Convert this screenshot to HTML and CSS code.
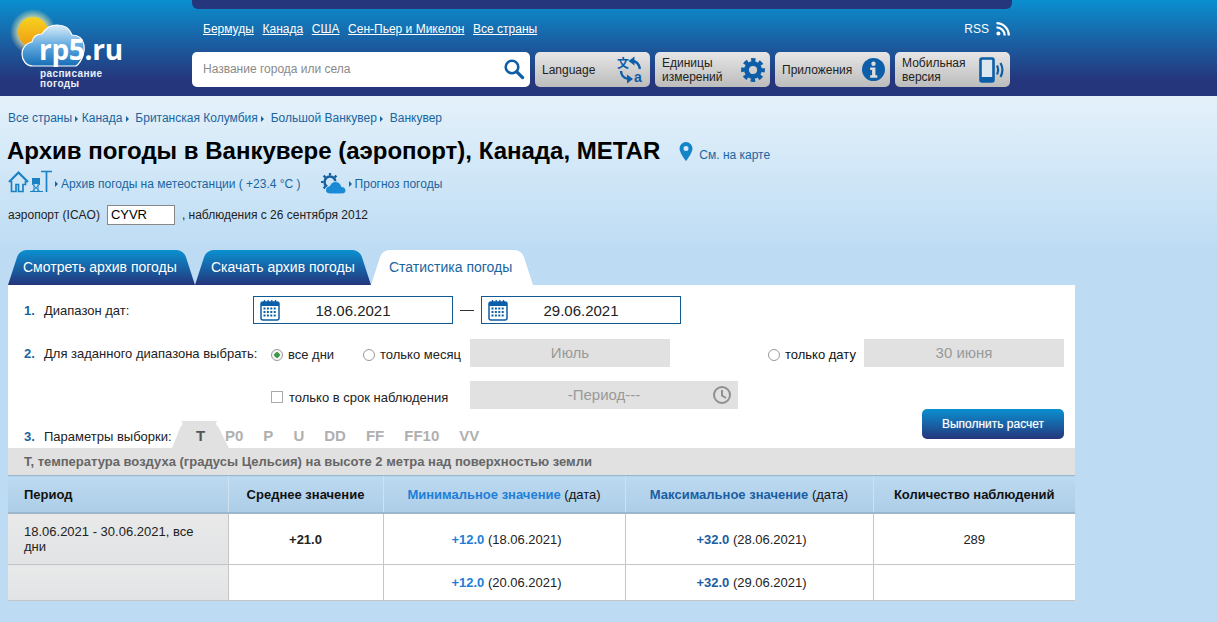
FILE: index.html
```html
<!DOCTYPE html>
<html>
<head>
  <meta charset="UTF-8" />
  <title>Архив погоды в Ванкувере (аэропорт), METAR</title>
  <link rel="stylesheet" href="styles.css">
</head>
<body>

  <div class="header">
    <a class="logo">
      <svg class="logo-art" width="90" height="70" viewBox="0 0 90 70">
        <defs>
          <radialGradient id="sunGlow" cx="0.5" cy="0.5" r="0.5">
            <stop offset="0.6" stop-color="#fff2a8" stop-opacity="0.75"/>
            <stop offset="1" stop-color="#fff2a8" stop-opacity="0"/>
          </radialGradient>
          <linearGradient id="sunFill" x1="0" y1="0" x2="0" y2="1">
            <stop offset="0" stop-color="#f6d21f"/>
            <stop offset="1" stop-color="#f09a12"/>
          </linearGradient>
          <linearGradient id="cloudFill" x1="0" y1="0" x2="0" y2="1">
            <stop offset="0" stop-color="#d9ecf9"/>
            <stop offset="0.5" stop-color="#62aae0"/>
            <stop offset="1" stop-color="#156eb6"/>
          </linearGradient>
        </defs>
        <circle cx="24" cy="24" r="23" fill="url(#sunGlow)"/>
        <circle cx="24" cy="24" r="15" fill="url(#sunFill)"/>
        <path d="M24 58c-7 0-11-6-11-12 0-6 4-11 10-12 1-5 5-8 10-8 3-5 8-9 15-9 8 0 13 4 15 10 7 0 11 4 12 10 1 5-1 16-8 21z" fill="url(#cloudFill)" stroke="#fff" stroke-width="1.2"/>
      </svg>
      <span class="logo-name">rp5.ru</span>
      <span class="logo-sub">расписание<br>погоды</span>
    </a>

    <div class="header-main">
      <div class="top-bar"></div>
      <div class="nav">
        <div class="nav-links">
          <a href="#">Бермуды</a>
          <a href="#">Канада</a>
          <a href="#">США</a>
          <a href="#">Сен-Пьер и Микелон</a>
          <a href="#">Все страны</a>
        </div>
        <div class="rss">RSS
          <svg width="14" height="14" viewBox="0 0 14 14"><circle cx="2.4" cy="11.6" r="2" fill="#fff"/><path d="M.5 5.3a8.2 8.2 0 0 1 8.2 8.2M.5 1.2a12.3 12.3 0 0 1 12.3 12.3" fill="none" stroke="#fff" stroke-width="2.3"/></svg>
        </div>
      </div>
      <div class="tools">
        <div class="search">
          <span>Название города или села</span>
          <svg width="22" height="22" viewBox="0 0 22 22"><circle cx="9" cy="9" r="6.3" fill="none" stroke="#0d5ea8" stroke-width="2.6"/><path d="M13.6 13.6l6 6" stroke="#0d5ea8" stroke-width="3.2" stroke-linecap="round"/></svg>
        </div>
        <div class="tool">
          <span>Language</span>
          <svg class="tool-icon" width="28" height="28" viewBox="0 0 28 28">
            <text x="0" y="12" class="tool-zh">文</text>
            <path d="M15 5c4 0 7 3 8 8" fill="none" stroke="#0d5ea8" stroke-width="2.4"/>
            <path d="M17.500 .5v9L11.500 5z" fill="#0d5ea8"/>
            <path d="M4 15c0 4 3 8 8 8" fill="none" stroke="#0d5ea8" stroke-width="2.4"/>
            <path d="M10 18.500v9l6-4.500z" fill="#0d5ea8"/>
            <text x="17" y="26" class="tool-a">a</text>
          </svg>
        </div>
        <div class="tool">
          <span>Единицы<br>измерений</span>
          <svg class="tool-icon" width="24" height="24" viewBox="0 0 24 24">
            <circle cx="12" cy="12" r="6.500" fill="none" stroke="#0d5ea8" stroke-width="4.800"/>
            <circle cx="12" cy="12" r="10" fill="none" stroke="#0d5ea8" stroke-width="3.800" stroke-dasharray="4.400 3.454" stroke-dashoffset="2.200"/>
          </svg>
        </div>
        <div class="tool">
          <span>Приложения</span>
          <svg class="tool-icon" width="23" height="23" viewBox="0 0 24 24"><circle cx="12" cy="12" r="12" fill="#0d5ea8"/><circle cx="12" cy="6" r="2.300" fill="#ddd"/><path d="M8.500 10h5.500v8h2v2.500H8.500V18h2v-5.500h-2z" fill="#ddd"/></svg>
        </div>
        <div class="tool">
          <span>Мобильная<br>версия</span>
          <svg class="tool-icon" width="26" height="26" viewBox="0 0 26 26"><rect x="1.500" y="1.500" width="13" height="23" rx="1.500" fill="#dbe6ef" stroke="#0d5ea8" stroke-width="2.600"/><rect x="1.500" y="20" width="13" height="4.500" fill="#0d5ea8"/><path d="M18 8.500c1.500 3 1.500 6 0 9M21.500 6c2.500 4.500 2.500 9.500 0 14" fill="none" stroke="#0d5ea8" stroke-width="2.200"/></svg>
        </div>
      </div>
    </div>
  </div>

  <div class="intro">
    <div class="crumbs">
      <a href="#">Все страны</a><i></i>
      <a href="#">Канада</a><i></i>
      <a href="#">Британская Колумбия</a><i></i>
      <a href="#">Большой Ванкувер</a><i></i>
      <a href="#">Ванкувер</a>
    </div>

    <div class="title-row">
      <h1>Архив погоды в Ванкувере (аэропорт), Канада, METAR</h1>
      <a class="map-link" href="#">
        <svg width="14" height="19" viewBox="0 0 14 19"><path fill-rule="evenodd" fill="#1484c8" d="M7 0a6.500 6.500 0 0 1 6.500 6.500C13.500 11 7 19 7 19S.5 11 .5 6.500A6.500 6.500 0 0 1 7 0zm0 4a2.500 2.500 0 1 0 0 5 2.500 2.500 0 0 0 0-5z"/></svg>
        <span>См. на карте</span>
      </a>
    </div>

    <div class="links-row">
      <svg class="station" width="45" height="23" viewBox="0 0 45 23">
        <g fill="none" stroke="#1a82c4">
          <path d="M1 12L10.500 2.500 20 12" stroke-width="2.200"/>
          <path d="M3.500 11v10.500H8v-7h2.500v7H15v-7h2.500V11" stroke-width="1.700"/>
          <path d="M24 14l8 7.500M32 14l-8 7.500M22 21.500h13M26 14v7.500M30 14v7.500" stroke-width="1"/>
          <path d="M33 1.500h11M38.500 1.500V22" stroke-width="1.700"/>
        </g>
        <path d="M24 8h8v6h-8z" fill="#1a82c4"/>
      </svg>
      <i></i><a href="#">Архив погоды на метеостанции ( +23.4 °C )</a>
      <svg class="sun-cloud" width="26" height="22" viewBox="0 0 26 22">
        <circle cx="9" cy="9" r="5.500" fill="none" stroke="#14609f" stroke-width="2.500"/>
        <path d="M9 0v2.500M2.600 2.600l1.800 1.800M0 9h2.500M2.600 15.400l1.800-1.800M15.400 2.600l-1.800 1.800" stroke="#14609f" stroke-width="2.200"/>
        <path d="M9 21c-3 0-4.500-2-4.500-4 0-2.500 2-4 4-4 1-3 3.500-4.500 6-4.500 3.500 0 5.500 2.500 6 5 2.500 0 4.500 2 4.500 4 0 2-1.500 3.500-4 3.500z" fill="#1b8ad6" stroke="#d3e8f8"/>
      </svg>
      <i></i><a href="#">Прогноз погоды</a>
    </div>

    <div class="icao-row">
      <span>аэропорт (ICAO)</span>
      <span class="icao-box">CYVR</span>
      <span>, наблюдения с 26 сентября 2012</span>
    </div>
  </div>

  <div class="tabs">
    <a class="tab tab-first" href="#"><span>Смотреть архив погоды</span></a>
    <a class="tab tab-second" href="#"><span>Скачать архив погоды</span></a>
    <a class="tab tab-active" href="#"><span>Статистика погоды</span></a>
  </div>

  <div class="panel">
    <div class="form-row row-dates">
      <b class="num">1.</b>
      <span class="label">Диапазон дат:</span>
      <div class="date-box">
        <svg class="cal" width="20" height="22" viewBox="0 0 20 22">
          <rect x="1" y="3" width="18" height="18" rx="2" fill="#fff" stroke="#0d5ea8" stroke-width="1.500"/>
          <rect x="1" y="3" width="18" height="4" fill="#0d5ea8"/>
          <path d="M4.500 1v4M8.200 1v4M11.800 1v4M15.500 1v4" stroke="#0d5ea8" stroke-width="1.300"/>
          <path d="M3.500 9.500h13M3.500 13h13M3.500 16.500h13" stroke="#0d5ea8" stroke-width="2" stroke-dasharray="2 1.400"/>
        </svg>
        18.06.2021
      </div>
      <span class="dash"></span>
      <div class="date-box">
        <svg class="cal" width="20" height="22" viewBox="0 0 20 22">
          <rect x="1" y="3" width="18" height="18" rx="2" fill="#fff" stroke="#0d5ea8" stroke-width="1.500"/>
          <rect x="1" y="3" width="18" height="4" fill="#0d5ea8"/>
          <path d="M4.500 1v4M8.200 1v4M11.800 1v4M15.500 1v4" stroke="#0d5ea8" stroke-width="1.300"/>
          <path d="M3.500 9.500h13M3.500 13h13M3.500 16.500h13" stroke="#0d5ea8" stroke-width="2" stroke-dasharray="2 1.400"/>
        </svg>
        29.06.2021
      </div>
    </div>

    <div class="form-row row-pick">
      <b class="num">2.</b>
      <span class="label label-wide">Для заданного диапазона выбрать:</span>
      <span class="radio radio-on"></span><span class="opt opt-all">все дни</span>
      <span class="radio"></span><span class="opt opt-month">только месяц</span>
      <div class="grey-box box-month">Июль</div>
      <span class="radio"></span><span class="opt opt-date">только дату</span>
      <div class="grey-box box-date">30 июня</div>
    </div>

    <div class="form-row row-period">
      <span class="check"></span><span class="opt opt-term">только в срок наблюдения</span>
      <div class="grey-box box-period">
        -Период---
        <svg class="clock" width="20" height="20" viewBox="0 0 20 20"><circle cx="10" cy="10" r="8" fill="none" stroke="#8f8f8f" stroke-width="2"/><path d="M10 5v5.500l4 2.500" fill="none" stroke="#8f8f8f" stroke-width="2"/></svg>
      </div>
    </div>

    <div class="form-row row-params">
      <b class="num">3.</b>
      <span class="label-params">Параметры выборки:</span>
      <div class="params">
        <a class="param param-on"><span>T</span></a>
        <a class="param">P0</a>
        <a class="param">P</a>
        <a class="param">U</a>
        <a class="param">DD</a>
        <a class="param">FF</a>
        <a class="param">FF10</a>
        <a class="param">VV</a>
      </div>
      <a class="run-btn" href="#">Выполнить расчет</a>
    </div>

    <div class="param-title">T, температура воздуха (градусы Цельсия) на высоте 2 метра над поверхностью земли</div>

    <table class="stats">
      <colgroup>
        <col class="col-a"><col class="col-b"><col class="col-c"><col class="col-d"><col class="col-e">
      </colgroup>
      <tr>
        <th class="period">Период</th>
        <th>Среднее значение</th>
        <th><span class="min">Минимальное значение</span> <span class="thin">(дата)</span></th>
        <th><span class="max">Максимальное значение</span> <span class="thin">(дата)</span></th>
        <th>Количество наблюдений</th>
      </tr>
      <tr class="row-tall">
        <td class="period">18.06.2021 - 30.06.2021, все дни</td>
        <td><b>+21.0</b></td>
        <td class="dated"><b class="min">+12.0</b> (18.06.2021)</td>
        <td class="dated"><b class="max">+32.0</b> (28.06.2021)</td>
        <td>289</td>
      </tr>
      <tr class="row-short">
        <td class="period"></td>
        <td></td>
        <td class="dated"><b class="min">+12.0</b> (20.06.2021)</td>
        <td class="dated"><b class="max">+32.0</b> (29.06.2021)</td>
        <td></td>
      </tr>
    </table>
  </div>

</body>
</html>
```

FILE: styles.css
```css
html {
  background: #bddcf4;
}

body {
  margin: 0;
  height: 622px;
  overflow: hidden;
  font-family: "Liberation Sans", Arial, sans-serif;
  font-size: 12px;
  color: #222;
  background: linear-gradient(#e4f1fa 96px, #bddcf4 250px);
}

a {
  text-decoration: none;
  color: #1a659f;
}

/* header */

.header {
  display: flex;
  height: 96px;
  background: linear-gradient(#0a8fcf 0, #1b5c9f 45px, #25367c 80px);
}

.logo {
  position: relative;
  display: block;
  width: 192px;
  color: #fff;
}

.logo-art {
  position: absolute;
  top: 8px;
  left: 9px;
}

.logo-name {
  position: absolute;
  top: 34px;
  left: 39px;
  font-family: "Open Sans", sans-serif;
  font-size: 28px;
  font-weight: 700;
  line-height: 30px;
  letter-spacing: -0.3px;
  color: #fff;
}

.logo-sub {
  position: absolute;
  top: 69px;
  left: 40px;
  font-size: 10px;
  font-weight: 700;
  line-height: 10px;
  letter-spacing: 0.4px;
  color: #e8f0f8;
}

.header-main {
  width: 820px;
}

.top-bar {
  height: 9px;
  background: #25367c;
  border-radius: 0 0 6px 6px;
}

.nav {
  display: flex;
  justify-content: space-between;
  align-items: center;
  height: 20px;
  margin-top: 10px;
  padding: 0 2px 0 11px;
}

.nav-links a {
  color: #fff;
  text-decoration: underline;
  margin-right: 5.3px;
}

.rss {
  display: flex;
  align-items: center;
  gap: 7px;
  color: #fff;
  font-size: 12px;
}

.tools {
  display: flex;
  gap: 5px;
  margin-top: 13px;
}

.search {
  display: flex;
  align-items: center;
  justify-content: space-between;
  width: 338px;
  height: 35px;
  padding: 0 5px 2px 11px;
  box-sizing: border-box;
  background: #fff;
  border-radius: 5px;
  color: #8a8a8a;
}

.tool {
  display: flex;
  align-items: center;
  justify-content: space-between;
  width: 115px;
  height: 35px;
  padding: 0 5px 0 7px;
  box-sizing: border-box;
  background: linear-gradient(#e6e6e6, #bcbcbc);
  border-radius: 5px;
  color: #222;
  line-height: 14px;
}

.tool-icon {
  overflow: visible;
}

.tool-zh {
  font-family: "Noto Sans CJK SC", sans-serif;
  font-size: 12px;
  font-weight: 700;
  fill: #0d5ea8;
}

.tool-a {
  font-size: 14px;
  font-weight: 700;
  fill: #0d5ea8;
}

/* intro block */

.intro {
  padding: 15px 0 0 8px;
}

.crumbs {
  height: 14px;
  line-height: 14px;
  color: #1a659f;
}

.crumbs i,
.links-row i {
  display: inline-block;
  width: 0;
  height: 0;
  border-left: 3px solid #1a659f;
  border-top: 3px solid transparent;
  border-bottom: 3px solid transparent;
}

.crumbs i {
  margin: 0 3.3px;
}

.crumbs i:first-of-type {
  margin-right: 0;
}

.title-row {
  display: flex;
  align-items: center;
  height: 28px;
  margin-top: 12px;
  margin-left: -1px;
}

h1 {
  margin: 0;
  font-size: 24px;
  line-height: 28px;
  color: #000;
}

.map-link {
  display: flex;
  align-items: center;
  gap: 6px;
  margin-left: 19px;
}

.map-link span {
  margin-top: 7px;
}

.links-row {
  display: flex;
  align-items: center;
  height: 24px;
  margin-top: 7px;
}

.station {
  margin: 0 1px 5px 0;
}

.links-row .sun-cloud {
  margin-left: 20px;
  margin-right: 1px;
}

.links-row i {
  margin: 0 3px 0 1px;
}

.icao-row {
  display: flex;
  align-items: center;
  height: 22px;
  margin-top: 8px;
}

.icao-box {
  width: 63px;
  height: 18px;
  margin: 0 7px;
  padding-left: 3px;
  background: #fff;
  border: 1px solid #888;
  font-size: 13px;
  line-height: 18px;
  color: #000;
}

/* tabs */

.tabs {
  display: flex;
  height: 35px;
  margin: 24px 0 0 8px;
}

.tab {
  position: relative;
  display: block;
  height: 35px;
  font-size: 14px;
  line-height: 35px;
  color: #fff;
  white-space: nowrap;
}

.tab span {
  position: relative;
  z-index: 1;
}

.tab::before,
.tab::after {
  content: "";
  position: absolute;
  top: 0;
  bottom: 0;
  width: 60%;
  background: linear-gradient(#0a90d0, #25367c);
}

.tab::before {
  left: 0;
  transform: skewX(-18deg);
  transform-origin: left bottom;
  border-radius: 7px 0 0 0;
}

.tab::after {
  right: 0;
  transform: skewX(18deg);
  transform-origin: right bottom;
  border-radius: 0 7px 0 0;
}

.tab-first {
  width: 187px;
  padding-left: 15px;
  box-sizing: border-box;
}

.tab-second {
  width: 176px;
  padding-left: 16px;
  box-sizing: border-box;
}

.tab-active {
  width: 162px;
  padding-left: 18px;
  box-sizing: border-box;
  color: #1a659f;
}

.tab-active::before,
.tab-active::after {
  background: #fff;
}

/* form */

.panel {
  width: 1067px;
  margin-left: 8px;
  background: #fff;
  font-size: 13px;
}

.form-row {
  display: flex;
  align-items: center;
  padding-left: 16px;
}

.num {
  width: 20px;
  color: #1a659f;
  font-weight: 700;
}

.row-dates .num,
.row-pick .num {
  margin-top: 1px;
}

.label {
  width: 209px;
  margin-top: 1px;
}

.label-wide {
  width: 227px;
}

.row-dates {
  height: 28px;
  padding-top: 11px;
}

.row-pick {
  height: 28px;
  margin-top: 15px;
}

.row-period {
  height: 28px;
  margin-top: 14px;
  padding-left: 263px;
}

.date-box {
  position: relative;
  width: 198px;
  height: 26px;
  border: 1px solid #0f5a94;
  font-size: 15px;
  line-height: 27px;
  text-align: center;
  color: #222;
}

.cal {
  position: absolute;
  top: 2px;
  left: 6px;
}

.dash {
  width: 14px;
  height: 1px;
  margin: 0 7px;
  background: #333;
}

.radio {
  width: 10px;
  height: 10px;
  margin: 3px 5px 0 0;
  background: #fff;
  border: 1px solid #999;
  border-radius: 50%;
}

.radio-on {
  background: radial-gradient(circle, #3f9a45 2.5px, #f4f4f4 3px);
}

.opt {
  margin-top: 3px;
}

.opt-all {
  width: 75px;
}

.opt-month {
  width: 90px;
}

.opt-date {
  width: 79px;
  color: #111;
}

.opt-term {
  width: 181px;
  margin-top: 5px;
}

.check {
  width: 10px;
  height: 10px;
  margin: 3px 6px 0 0;
  border: 1px solid #aaa;
}

.grey-box {
  position: relative;
  height: 28px;
  background: #e1e1e1;
  font-size: 15px;
  line-height: 28px;
  text-align: center;
  color: #999;
}

.box-month {
  width: 200px;
  margin-right: 98px;
}

.box-date {
  width: 200px;
}

.box-period {
  width: 268px;
}

.clock {
  position: absolute;
  top: 4px;
  right: 6px;
}

.row-params {
  align-items: flex-start;
  height: 39px;
  padding-right: 11px;
}

.row-params .num {
  margin-top: 20px;
}

.label-params {
  width: 128px;
  margin-top: 20px;
  white-space: nowrap;
}

.params {
  display: flex;
  flex: 1;
  height: 27px;
  margin-top: 12px;
}

.param {
  position: relative;
  height: 27px;
  padding: 0 10px;
  font-size: 15px;
  font-weight: 700;
  line-height: 30px;
  color: #b0b0b0;
}

.param-on {
  width: 57px;
  margin-right: -14px;
  padding: 0;
  box-sizing: border-box;
  text-align: center;
  color: #555;
}

.param-on::before,
.param-on::after {
  content: "";
  position: absolute;
  top: 0;
  bottom: 0;
  width: 60%;
  background: #e1e1e1;
}

.param-on::before {
  left: 0;
  transform: skewX(-22deg);
  transform-origin: left bottom;
  border-radius: 7px 0 0 0;
}

.param-on::after {
  right: 0;
  transform: skewX(27deg);
  transform-origin: right bottom;
  border-radius: 0 7px 0 0;
}

.param-on span {
  position: relative;
  z-index: 1;
}

.run-btn {
  width: 142px;
  height: 30px;
  background: linear-gradient(#0a90d0, #25367c);
  border-radius: 5px;
  font-size: 12px;
  line-height: 30px;
  text-align: center;
  text-shadow: 0 0 1px rgba(255, 255, 255, 0.5);
  color: #fff;
}

.param-title {
  height: 27px;
  padding-left: 16px;
  background: #e1e1e1;
  font-weight: 700;
  line-height: 27px;
  color: #666;
}

/* results table */

.stats {
  width: 100%;
  border-collapse: collapse;
  table-layout: fixed;
}

.col-a { width: 220px; }
.col-b { width: 155px; }
.col-c { width: 242px; }
.col-d { width: 248px; }

.stats th,
.stats td {
  border-left: 1px solid #c5c5c5;
  text-align: center;
  font-size: 13px;
}

.stats th {
  height: 36px;
  padding: 0;
  background: linear-gradient(#bcdaf1, #adcde7);
  border-top: 1px solid #9cb6cc;
  border-bottom: 2px solid #9cb6cc;
  border-left-color: #d0e2f0;
  color: #111;
}

.stats th:first-child,
.stats td:first-child {
  border-left: 0;
}

.stats td {
  padding: 0;
  border-bottom: 1px solid #c5c5c5;
}

.stats td.dated {
  padding-left: 5px;
}

.stats .period {
  padding-left: 16px;
  padding-right: 24px;
  text-align: left;
}

.stats td.period {
  background: linear-gradient(#e9e9e9, #e1e3e5);
}

.row-tall td {
  height: 50px;
  line-height: 15px;
}

.row-short td {
  height: 35px;
}

.min {
  color: #1e7ed6;
}

.max {
  color: #1a5ea3;
}

.thin {
  font-weight: 400;
}
```
